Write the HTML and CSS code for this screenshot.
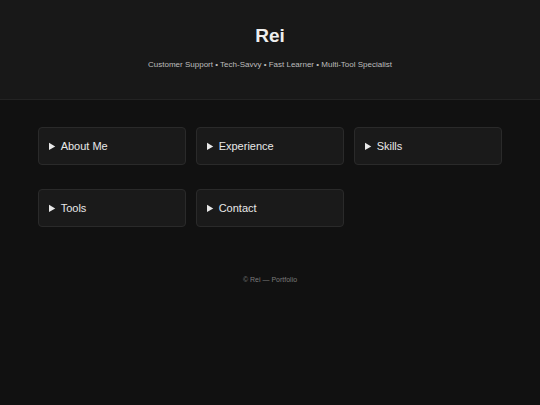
FILE: index.html
```html
<!DOCTYPE html>
<html lang="en">
<head>
<meta charset="utf-8">
<title>Rei — Portfolio</title>
<link rel="stylesheet" href="styles.css">
</head>
<body>
<header class="hero">
  <h1 class="hero-title">Rei</h1>
  <p class="hero-sub">Customer Support • Tech-Savvy • Fast Learner • Multi-Tool Specialist</p>
</header>
<main class="sections">
  <details class="card"><summary>About Me</summary></details>
  <details class="card"><summary>Experience</summary></details>
  <details class="card"><summary>Skills</summary></details>
  <details class="card"><summary>Tools</summary></details>
  <details class="card"><summary>Contact</summary></details>
</main>
<footer class="foot">© Rei — Portfolio</footer>
</body>
</html>
```
FILE: styles.css
```css
html, body {
  margin: 0;
  padding: 0;
  background: #111111;
  color: #e6e6e6;
  font-family: "Liberation Sans", Arial, sans-serif;
}
.hero {
  background: #181818;
  border-bottom: 1px solid #232323;
  height: 100px;
  box-sizing: border-box;
  padding-top: 25px;
  text-align: center;
}
.hero-title {
  margin: 0;
  font-size: 19px;
  line-height: 22px;
  font-weight: bold;
  color: #eeeeee;
}
.hero-sub {
  margin: 13px 0 0;
  font-size: 8px;
  line-height: 10px;
  color: #bdbdbd;
}
.sections {
  display: grid;
  grid-template-columns: repeat(3, 148px);
  column-gap: 10px;
  row-gap: 24px;
  justify-content: center;
  padding-top: 27px;
}
.card {
  background: #1a1a1a;
  border: 1px solid #2a2a2a;
  border-radius: 4px;
  box-sizing: border-box;
}
.card summary {
  padding: 11px 10px;
  font-size: 11px;
  line-height: 14px;
  color: #e8e8e8;
  cursor: pointer;
}
.foot {
  text-align: center;
  font-size: 7px;
  line-height: 10px;
  color: #7a7a7a;
  margin-top: 48px;
}
```
